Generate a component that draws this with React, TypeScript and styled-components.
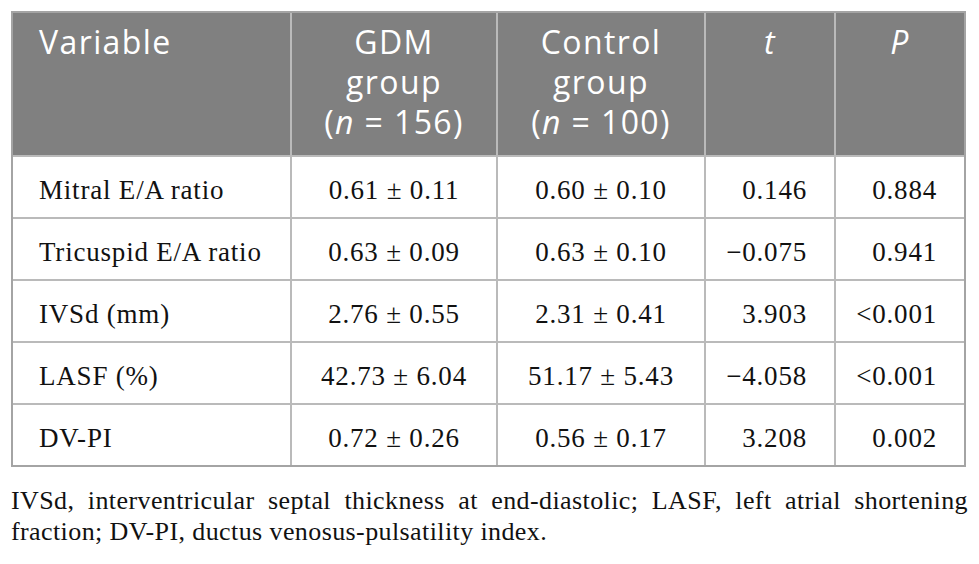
import styled, { createGlobalStyle } from "styled-components";

const GlobalStyle = createGlobalStyle`
  body {
    margin: 0;
    background: #ffffff;
  }
`;

const Page = styled.div`
  padding: 11px 11px 0 11px;
`;

const Table = styled.div`
  display: grid;
  grid-template-columns: 277px 204px 206px 128px 128px;
  grid-template-rows: 142px repeat(5, 60px);
  gap: 2px;
  width: 955px;
  box-sizing: border-box;
  border: 2px solid #a4a4a4;
  background-color: #bababa;
`;

type Align = "left" | "center" | "right";

const HeadCell = styled.div<{ $align?: Align }>`
  background-color: #808080;
  color: #ffffff;
  font-family: "Open Sans", "Liberation Sans", sans-serif;
  font-size: 32px;
  line-height: 40px;
  letter-spacing: 1.4px;
  padding: 9px 20px 0 26px;
  text-align: ${(p) => p.$align ?? "center"};
  ${(p) => (p.$align === "left" ? "" : "padding-left: 10px; padding-right: 10px;")}
`;

const Cell = styled.div<{ $align?: Align }>`
  background-color: #ffffff;
  color: #111111;
  font-family: "Liberation Serif", "Times New Roman", serif;
  font-size: 27px;
  line-height: 31px;
  letter-spacing: 0.8px;
  display: flex;
  align-items: center;
  padding: 7px 27px 0 26px;
  justify-content: ${(p) =>
    p.$align === "right" ? "flex-end" : p.$align === "center" ? "center" : "flex-start"};
  ${(p) => (p.$align === "center" ? "padding-left: 0; padding-right: 0;" : "")}
`;

const Footnote = styled.div`
  width: 957px;
  margin-top: 18px;
  font-family: "Liberation Serif", "Times New Roman", serif;
  font-size: 26px;
  line-height: 31px;
  letter-spacing: 0.4px;
  color: #111111;
`;

const FootLine = styled.div<{ $justify?: boolean }>`
  text-align: ${(p) => (p.$justify ? "justify" : "left")};
  text-align-last: ${(p) => (p.$justify ? "justify" : "left")};
`;

interface Row {
  name: string;
  gdm: string;
  control: string;
  t: string;
  p: string;
}

const rows: Row[] = [
  { name: "Mitral E/A ratio", gdm: "0.61 ± 0.11", control: "0.60 ± 0.10", t: "0.146", p: "0.884" },
  { name: "Tricuspid E/A ratio", gdm: "0.63 ± 0.09", control: "0.63 ± 0.10", t: "−0.075", p: "0.941" },
  { name: "IVSd (mm)", gdm: "2.76 ± 0.55", control: "2.31 ± 0.41", t: "3.903", p: "<0.001" },
  { name: "LASF (%)", gdm: "42.73 ± 6.04", control: "51.17 ± 5.43", t: "−4.058", p: "<0.001" },
  { name: "DV-PI", gdm: "0.72 ± 0.26", control: "0.56 ± 0.17", t: "3.208", p: "0.002" },
];

export default function App() {
  return (
    <Page>
      <GlobalStyle />
      <Table role="table">
        <HeadCell $align="left">Variable</HeadCell>
        <HeadCell>
          GDM
          <br />
          group
          <br />(<i>n</i> = 156)
        </HeadCell>
        <HeadCell>
          Control
          <br />
          group
          <br />(<i>n</i> = 100)
        </HeadCell>
        <HeadCell>
          <i>t</i>
        </HeadCell>
        <HeadCell>
          <i>P</i>
        </HeadCell>
        {rows.map((r) => (
          <>
            <Cell key={r.name + "-n"}>{r.name}</Cell>
            <Cell key={r.name + "-g"} $align="center">{r.gdm}</Cell>
            <Cell key={r.name + "-c"} $align="center">{r.control}</Cell>
            <Cell key={r.name + "-t"} $align="right">{r.t}</Cell>
            <Cell key={r.name + "-p"} $align="right">{r.p}</Cell>
          </>
        ))}
      </Table>
      <Footnote>
        <FootLine $justify>
          IVSd, interventricular septal thickness at end-diastolic; LASF, left atrial shortening
        </FootLine>
        <FootLine>fraction; DV-PI, ductus venosus-pulsatility index.</FootLine>
      </Footnote>
    </Page>
  );
}
